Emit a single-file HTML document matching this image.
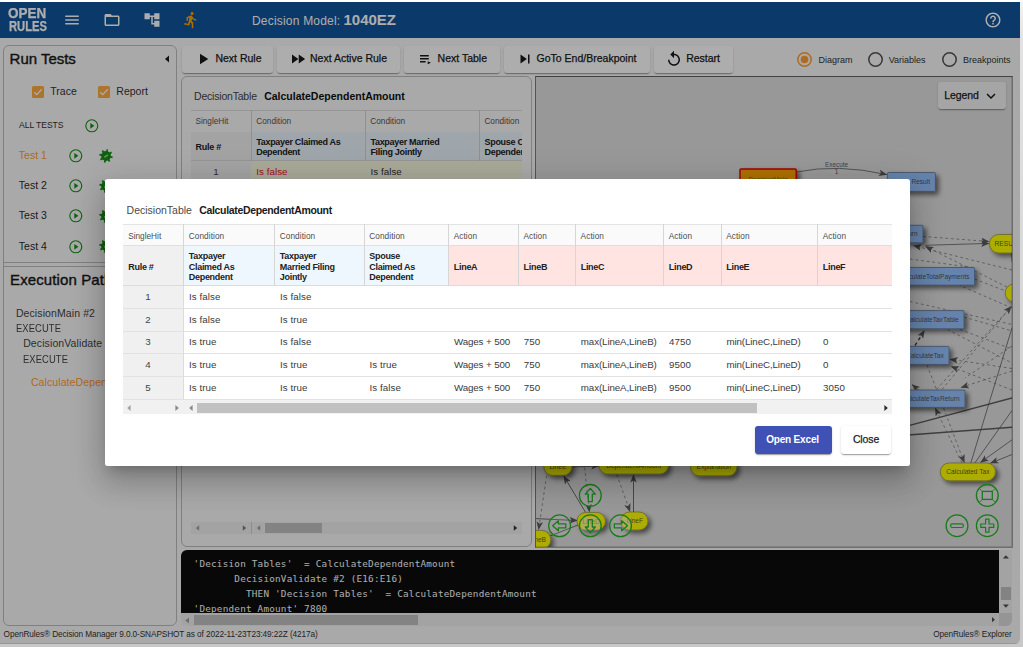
<!DOCTYPE html>
<html lang="en">
<head>
<meta charset="utf-8">
<title>OpenRules Explorer</title>
<style>
*{box-sizing:border-box;margin:0;padding:0}
html,body{width:1023px;height:647px;overflow:hidden}
body{background:linear-gradient(#f4f4f4 0,#e2e2e2 40px,#c8c8c8 100%);font-family:"Liberation Sans",Arial,sans-serif;color:#222;position:relative}
.topline{position:absolute;left:0;top:0;width:1023px;height:2px;background:#fff}
#app{position:absolute;left:0;top:2px;width:1020.2px;height:642px;background:#fafafa;overflow:hidden;border-radius:0 0 5px 0}
.abs{position:absolute}
.t{position:absolute;white-space:nowrap;line-height:1}
/* header */
#hdr{position:absolute;left:0;top:0;width:1020px;height:36px;background:#10559d}
.logo{color:#fff;font-weight:bold;transform-origin:0 0;-webkit-text-stroke:.25px #fff}
.ep{font-size:10.5px;color:#444;letter-spacing:.1px}
.hd{font-size:15px;color:#1a1a1a;-webkit-text-stroke:.4px #1a1a1a;letter-spacing:-.02px}
.bl{top:7.2px;font-size:10.5px;color:#1a1a1a;-webkit-text-stroke:.25px #1a1a1a}
.rl{top:54.1px;font-size:9px;color:#333}
/* panels */
.panel{position:absolute;border:1px solid #bdbdbd;border-radius:6px;background:transparent}
.btn{position:absolute;top:44px;height:27px;border-radius:3px;background:#fff;box-shadow:0 2px 1px -1px rgba(0,0,0,.2),0 1px 1px 0 rgba(0,0,0,.14),0 1px 3px 0 rgba(0,0,0,.12)}
#dim{position:absolute;left:0;top:0;width:1021px;height:642px;background:rgba(0,0,0,.32);box-shadow:inset 0 -1px 0 rgba(0,0,0,.1)}
#modal{position:absolute;left:105px;top:179px;width:805.3px;height:286.7px;background:#fff;border-radius:2.5px;box-shadow:0 8px 11px -5px rgba(0,0,0,.2),0 18px 28px 2px rgba(0,0,0,.14),0 7px 34px 6px rgba(0,0,0,.12)}
</style>
</head>
<body>
<div class="topline"></div>
<div id="app">
  <div id="hdr">
    <div class="t logo" style="left:8px;top:4.3px;font-size:14.5px;transform:scaleX(.93)">OPEN</div>
    <div class="t logo" style="left:8.5px;top:16.6px;font-size:14px;transform:scaleX(.80)">RULES</div>
    <svg class="abs" style="left:63px;top:9px" width="18" height="18" viewBox="0 0 24 24" fill="#fff"><path d="M3 18h18v-2H3v2zm0-5h18v-2H3v2zm0-7v2h18V6H3z"/></svg>
    <svg class="abs" style="left:103px;top:9px" width="18" height="18" viewBox="0 0 24 24" fill="#fff"><path d="M20 6h-8l-2-2H4c-1.1 0-1.99.9-1.99 2L2 18c0 1.1.9 2 2 2h16c1.1 0 2-.9 2-2V8c0-1.1-.9-2-2-2zm0 12H4V8h16v10z"/></svg>
    <svg class="abs" style="left:142.5px;top:8.8px" width="18" height="18" viewBox="0 0 24 24" fill="#fff"><path d="M22 11V3h-7v3H9V3H2v8h7V8h2v10h4v3h7v-8h-7v3h-2V8h2v3z"/></svg>
    <svg class="abs" style="left:181.5px;top:9px" width="18" height="18" viewBox="0 0 24 24" fill="#ffa200"><path d="M13.49 5.48c1.1 0 2-.9 2-2s-.9-2-2-2-2 .9-2 2 .9 2 2 2zm-3.6 13.9l1-4.4 2.1 2v6h2v-7.5l-2.1-2 .6-3c1.3 1.5 3.3 2.5 5.5 2.5v-2c-1.9 0-3.5-1-4.3-2.4l-1-1.6c-.4-.6-1-1-1.7-1-.3 0-.5.1-.8.1l-5.2 2.2v4.7h2v-3.4l1.8-.7-1.6 8.1-4.9-1-.4 2 7 1.4z"/></svg>
    <div class="t" style="left:252px;top:12.5px;font-size:12px;color:#fff;letter-spacing:.2px">Decision Model:</div>
    <div class="t" style="left:343.5px;top:10px;font-size:15px;font-weight:bold;color:#fff">1040EZ</div>
    <svg class="abs" style="left:984px;top:9px" width="18" height="18" viewBox="0 0 24 24" fill="#fff"><path d="M11 18h2v-2h-2v2zm1-16C6.48 2 2 6.48 2 12s4.48 10 10 10 10-4.48 10-10S17.52 2 12 2zm0 18c-4.41 0-8-3.59-8-8s3.59-8 8-8 8 3.59 8 8-3.59 8-8 8zm0-14c-2.21 0-4 1.79-4 4h2c0-1.1.9-2 2-2s2 .9 2 2c0 2-3 1.75-3 5h2c0-2.25 3-2.5 3-5 0-2.21-1.79-4-4-4z"/></svg>
  </div>
  <!-- left panel -->
  <div class="panel" id="left" style="left:3px;top:43px;width:174px;height:581px">
    <div class="t hd" style="left:5.6px;top:4.9px">Run Tests</div>
    <svg class="abs" style="left:158.5px;top:7.7px" width="8" height="10" viewBox="0 0 8 10"><path d="M6 1.5L2 5l4 3.5z" fill="#1a1a1a"/></svg>
    <div class="abs" style="left:28px;top:40px;width:12px;height:12px;background:#ffab40;border-radius:1.5px"><svg width="12" height="12" viewBox="0 0 24 24" style="display:block"><path d="M4.5 12.5l5 5 10-11" stroke="#fff" stroke-width="2.4" fill="none"/></svg></div>
    <div class="t" style="left:46.3px;top:39.8px;font-size:10.5px;color:#333">Trace</div>
    <div class="abs" style="left:94px;top:40px;width:12px;height:12px;background:#ffab40;border-radius:1.5px"><svg width="12" height="12" viewBox="0 0 24 24" style="display:block"><path d="M4.5 12.5l5 5 10-11" stroke="#fff" stroke-width="2.4" fill="none"/></svg></div>
    <div class="t" style="left:112.3px;top:39.8px;font-size:10.5px;color:#333">Report</div>
    <div class="t" style="left:15px;top:75.1px;font-size:8.6px;color:#333;letter-spacing:-.05px">ALL TESTS</div>
    <svg class="abs" style="left:79.6px;top:71.9px" width="15.6" height="15.6" viewBox="0 0 15.6 15.6"><circle cx="7.8" cy="7.8" r="6" fill="none" stroke="#179017" stroke-width="1.15"/><path d="M6.3 4.9v5.8l4.1-2.9z" fill="#179017"/></svg>
    <div class="t" style="left:14.8px;top:103.9px;font-size:10.5px;color:#ff9d2e">Test 1</div>
    <svg class="abs" style="left:63.8px;top:101.7px" width="15.6" height="15.6" viewBox="0 0 15.6 15.6"><circle cx="7.8" cy="7.8" r="6" fill="none" stroke="#179017" stroke-width="1.15"/><path d="M6.3 4.9v5.8l4.1-2.9z" fill="#179017"/></svg>
    <svg class="abs" style="left:94.2px;top:101.6px" width="16" height="16" viewBox="0 0 16 16"><path d="M8.70 4.57L9.33 1.43M10.92 6.07L13.58 4.30M11.43 8.70L14.57 9.33M9.93 10.92L11.70 13.58M7.30 11.43L6.67 14.57M5.08 9.93L2.42 11.70M4.57 7.30L1.43 6.67M6.07 5.08L4.30 2.42" stroke="#179017" stroke-width="1.7" fill="none"/><circle cx="8" cy="8" r="4.9" fill="#179017"/><path d="M6.3 9.4L9.9 6.8" stroke="#9fcf9f" stroke-width="1.5" fill="none"/></svg>
    <div class="t" style="left:14.8px;top:134.2px;font-size:10.5px;color:#2a2a2a">Test 2</div>
    <svg class="abs" style="left:63.8px;top:132.0px" width="15.6" height="15.6" viewBox="0 0 15.6 15.6"><circle cx="7.8" cy="7.8" r="6" fill="none" stroke="#179017" stroke-width="1.15"/><path d="M6.3 4.9v5.8l4.1-2.9z" fill="#179017"/></svg>
    <svg class="abs" style="left:94.2px;top:131.9px" width="16" height="16" viewBox="0 0 16 16"><path d="M8.70 4.57L9.33 1.43M10.92 6.07L13.58 4.30M11.43 8.70L14.57 9.33M9.93 10.92L11.70 13.58M7.30 11.43L6.67 14.57M5.08 9.93L2.42 11.70M4.57 7.30L1.43 6.67M6.07 5.08L4.30 2.42" stroke="#179017" stroke-width="1.7" fill="none"/><circle cx="8" cy="8" r="4.9" fill="#179017"/><path d="M6.3 9.4L9.9 6.8" stroke="#9fcf9f" stroke-width="1.5" fill="none"/></svg>
    <div class="t" style="left:14.8px;top:164.4px;font-size:10.5px;color:#2a2a2a">Test 3</div>
    <svg class="abs" style="left:63.8px;top:162.2px" width="15.6" height="15.6" viewBox="0 0 15.6 15.6"><circle cx="7.8" cy="7.8" r="6" fill="none" stroke="#179017" stroke-width="1.15"/><path d="M6.3 4.9v5.8l4.1-2.9z" fill="#179017"/></svg>
    <svg class="abs" style="left:94.2px;top:162.1px" width="16" height="16" viewBox="0 0 16 16"><path d="M8.70 4.57L9.33 1.43M10.92 6.07L13.58 4.30M11.43 8.70L14.57 9.33M9.93 10.92L11.70 13.58M7.30 11.43L6.67 14.57M5.08 9.93L2.42 11.70M4.57 7.30L1.43 6.67M6.07 5.08L4.30 2.42" stroke="#179017" stroke-width="1.7" fill="none"/><circle cx="8" cy="8" r="4.9" fill="#179017"/><path d="M6.3 9.4L9.9 6.8" stroke="#9fcf9f" stroke-width="1.5" fill="none"/></svg>
    <div class="t" style="left:14.8px;top:194.7px;font-size:10.5px;color:#2a2a2a">Test 4</div>
    <svg class="abs" style="left:63.8px;top:192.5px" width="15.6" height="15.6" viewBox="0 0 15.6 15.6"><circle cx="7.8" cy="7.8" r="6" fill="none" stroke="#179017" stroke-width="1.15"/><path d="M6.3 4.9v5.8l4.1-2.9z" fill="#179017"/></svg>
    <svg class="abs" style="left:94.2px;top:192.4px" width="16" height="16" viewBox="0 0 16 16"><path d="M8.70 4.57L9.33 1.43M10.92 6.07L13.58 4.30M11.43 8.70L14.57 9.33M9.93 10.92L11.70 13.58M7.30 11.43L6.67 14.57M5.08 9.93L2.42 11.70M4.57 7.30L1.43 6.67M6.07 5.08L4.30 2.42" stroke="#179017" stroke-width="1.7" fill="none"/><circle cx="8" cy="8" r="4.9" fill="#179017"/><path d="M6.3 9.4L9.9 6.8" stroke="#9fcf9f" stroke-width="1.5" fill="none"/></svg>
    <div class="abs" style="left:0;top:216px;width:172px;height:5px;background:#fafafa;border-top:1px solid #bdbdbd;border-bottom:1px solid #bdbdbd"></div>
    <div class="t hd" style="left:6.1px;top:225.5px;letter-spacing:.1px">Execution Path</div>
    <div class="t ep" style="left:11.9px;top:262px">DecisionMain #2</div>
    <div class="t ep" style="left:12px;top:277.3px;transform:scaleX(.895);transform-origin:0 0">EXECUTE</div>
    <div class="t ep" style="left:19.2px;top:292.3px">DecisionValidate #2</div>
    <div class="t ep" style="left:19.3px;top:307.7px;transform:scaleX(.895);transform-origin:0 0">EXECUTE</div>
    <div class="t ep" style="left:26.9px;top:330.5px;color:#ff9d2e">CalculateDependentAmount</div>
  </div>
  <!-- toolbar -->
  <div class="btn" style="left:182px;width:91px"><svg class="abs" style="left:12px;top:3.9px" width="18" height="18" viewBox="0 0 24 24" fill="#1a1a1a"><path d="M8 5v14l11-7z"/></svg><span class="t bl" style="left:33.4px">Next Rule</span></div>
  <div class="btn" style="left:277px;width:123px"><svg class="abs" style="left:12.4px;top:3.9px" width="18" height="18" viewBox="0 0 24 24" fill="#1a1a1a"><path d="M4 18l8.5-6L4 6v12zm9-12v12l8.5-6L13 6z"/></svg><span class="t bl" style="left:33px">Next Active Rule</span></div>
  <div class="btn" style="left:404px;width:96px"><svg class="abs" style="left:15.5px;top:8.65px" width="11" height="10" viewBox="0 0 11 10" fill="#1a1a1a"><path d="M0 0h8.8v1.5H0zM0 3h8.8v1.5H0zM0 6h5.6v1.5H0zM7.7 6.2l3.2 1.5-3.2 1.5z"/></svg><span class="t bl" style="left:33.6px">Next Table</span></div>
  <div class="btn" style="left:504px;width:146px"><svg class="abs" style="left:11.5px;top:3.9px" width="18" height="18" viewBox="0 0 24 24" fill="#1a1a1a"><path d="M6 18l8.5-6L6 6v12zM16 6v12h2V6h-2z"/></svg><span class="t bl" style="left:32.6px">GoTo End/Breakpoint</span></div>
  <div class="btn" style="left:654px;width:79px"><svg class="abs" style="left:10.9px;top:4.45px" width="18" height="18" viewBox="0 0 24 24" fill="#1a1a1a"><path d="M12 5V1L7 6l5 5V7c3.31 0 6 2.69 6 6s-2.69 6-6 6-6-2.69-6-6H4c0 4.42 3.58 8 8 8s8-3.58 8-8-3.58-8-8-8z"/></svg><span class="t bl" style="left:32.2px">Restart</span></div>
  <svg class="abs" style="left:797.0px;top:50.3px" width="15" height="15" viewBox="0 0 15 15"><circle cx="7.5" cy="7.5" r="6.7" fill="none" stroke="#ffa031" stroke-width="1.55"/><circle cx="7.5" cy="7.5" r="3.8" fill="#ffa031"/></svg>
  <span class="t rl" style="left:818.5px">Diagram</span>
  <svg class="abs" style="left:867.7px;top:50.3px" width="15" height="15" viewBox="0 0 15 15"><circle cx="7.5" cy="7.5" r="6.7" fill="none" stroke="#555" stroke-width="1.55"/></svg>
  <span class="t rl" style="left:888.7px">Variables</span>
  <svg class="abs" style="left:941.5px;top:50.3px" width="15" height="15" viewBox="0 0 15 15"><circle cx="7.5" cy="7.5" r="6.7" fill="none" stroke="#555" stroke-width="1.55"/></svg>
  <span class="t rl" style="left:963px">Breakpoints</span>
  <!-- table panel -->
  <div class="panel" id="tblp" style="left:181px;top:74px;width:351px;height:470.5px;overflow:hidden">
  <div class="t" style="left:12.0px;top:14.31px;font-size:10.5px;color:#444;letter-spacing:-.2px">DecisionTable</div>
  <div class="t" style="left:82.2px;top:14.31px;font-size:10.5px;color:#111;font-weight:bold">CalculateDependentAmount</div>
  <div class="abs" style="left:9px;top:33px;width:331px;height:425px;overflow:hidden">
  <div class="abs" style="left:0px;top:0px;width:331px;height:22.6px;background:#fafafa;border-top:1px solid #dcdcdc;border-bottom:1px solid #dcdcdc"></div>
  <div class="abs" style="left:0px;top:22px;width:60.4px;height:28.5px;background:#f0f0f0;border-bottom:1px solid #dcdcdc"></div>
  <div class="abs" style="left:60.4px;top:22px;width:271px;height:28.5px;background:#e9f3fc;border-bottom:1px solid #dcdcdc"></div>
  <div class="abs" style="left:0px;top:50.5px;width:60.4px;height:23px;background:#f0f0f0;"></div>
  <div class="abs" style="left:60.4px;top:50.5px;width:271px;height:23px;background:#fafae0;"></div>
  <div class="abs" style="left:59.9px;top:0px;width:1px;height:50.5px;background:#d4d4d4;"></div>
  <div class="abs" style="left:173.9px;top:0px;width:1px;height:50.5px;background:#d4d4d4;"></div>
  <div class="abs" style="left:288.0px;top:0px;width:1px;height:50.5px;background:#d4d4d4;"></div>
  <div class="t" style="left:4.4px;top:8.4px;font-size:8.25px;color:#555">SingleHit</div>
  <div class="t" style="left:65.3px;top:8.4px;font-size:8.25px;color:#555">Condition</div>
  <div class="t" style="left:179.3px;top:8.4px;font-size:8.25px;color:#555">Condition</div>
  <div class="t" style="left:293.4px;top:8.4px;font-size:8.25px;color:#555">Condition</div>
  <div class="t" style="left:4.4px;top:32.88px;font-size:9px;color:#222;font-weight:bold;letter-spacing:-.25px">Rule #</div>
  <div class="t" style="left:65.2px;top:27.58px;font-size:9px;color:#222;font-weight:bold;letter-spacing:-.3px">Taxpayer Claimed As</div>
  <div class="t" style="left:65.2px;top:38.18px;font-size:9px;color:#222;font-weight:bold;letter-spacing:-.3px">Dependent</div>
  <div class="t" style="left:179.4px;top:27.58px;font-size:9px;color:#222;font-weight:bold;letter-spacing:-.3px">Taxpayer Married</div>
  <div class="t" style="left:179.4px;top:38.18px;font-size:9px;color:#222;font-weight:bold;letter-spacing:-.3px">Filing Jointly</div>
  <div class="t" style="left:293.5px;top:27.58px;font-size:9px;color:#222;font-weight:bold;letter-spacing:-.3px">Spouse Claimed As</div>
  <div class="t" style="left:293.5px;top:38.18px;font-size:9px;color:#222;font-weight:bold;letter-spacing:-.3px">Dependent</div>
  <div class="t" style="left:22.2px;top:56.95px;font-size:9.75px;color:#444">1</div>
  <div class="t" style="left:65.3px;top:56.95px;font-size:9.75px;color:#e8141c;letter-spacing:.05px">Is false</div>
  <div class="t" style="left:179.5px;top:56.95px;font-size:9.75px;color:#333;letter-spacing:.05px">Is false</div>
  </div>
  <div class="abs" style="left:9px;top:444.6px;width:331px;height:12.5px;background:#f1f1f1"></div>
  <div class="abs" style="left:68.6px;top:444.6px;width:1px;height:12.5px;background:#d0d0d0"></div>
  <div class="abs" style="left:82.7px;top:446.2px;width:57.7px;height:9.5px;background:#c1c1c1"></div>
  <svg class="abs" style="left:15px;top:450.9px;overflow:visible" width="1" height="1"><polygon points="2.2,-2.8 2.2,2.8 -1.2,0" fill="#a3a3a3"/></svg>
  <svg class="abs" style="left:63px;top:450.9px;overflow:visible" width="1" height="1"><polygon points="-2.2,-2.8 -2.2,2.8 1.2,0" fill="#7c7c7c"/></svg>
  <svg class="abs" style="left:75.6px;top:450.9px;overflow:visible" width="1" height="1"><polygon points="2.2,-2.8 2.2,2.8 -1.2,0" fill="#a3a3a3"/></svg>
  <svg class="abs" style="left:333.5px;top:450.9px;overflow:visible" width="1" height="1"><polygon points="-2.2,-2.8 -2.2,2.8 1.2,0" fill="#303030"/></svg>
  </div>
  <!-- diagram panel -->
  <div class="panel" id="diag" style="left:535px;top:74px;width:478px;height:471.5px;background:#e1e1e1;border-radius:0;border-style:solid;border-width:1px 1.6px 1.6px 1px;border-color:#646464 #9f9f9f #a4a4a4 #7d7d7d;overflow:hidden"><div class="abs" style="left:0;top:0;right:0;bottom:0;box-shadow:inset -1px -1px 0 rgba(0,0,0,.14);z-index:3;pointer-events:none"></div>
    <svg class="abs" style="left:0;top:0" width="476" height="469.5" viewBox="536 77 476 469.5" font-family="Liberation Sans,Arial,sans-serif">
    <defs><filter id="sh" x="-30%" y="-50%" width="180%" height="250%"><feDropShadow dx="3" dy="3" stdDeviation="2.6" flood-color="#000" flood-opacity=".55"/></filter><marker id="ah" viewBox="0 0 10 8" refX="9.5" refY="4" markerWidth="9" markerHeight="6.6" markerUnits="userSpaceOnUse" orient="auto-start-reverse"><path d="M0 0L10 4L0 8L2.2 4z" fill="#5a5a5a"/></marker></defs>
    <path d="M796.5 172Q838 163.5 886.8 174.6" stroke="#5e5e5e" fill="none" stroke-width=".8" marker-end="url(#ah)"/>
    <text x="836.6" y="167" font-size="6.4" fill="#343434" fill-opacity=".8" text-anchor="middle">Execute</text>
    <text x="836.6" y="173.6" font-size="6.4" fill="#343434" fill-opacity=".8" text-anchor="middle">1</text>
    <path d="M923 236.5L989 241.5" stroke="#6c6c6c" fill="none" stroke-width="0.7" stroke-dasharray="2.8 2.8" marker-end="url(#ah)"/>
    <path d="M925.5 245.3L989 243.4" stroke="#5e5e5e" fill="none" stroke-width="0.8" marker-end="url(#ah)"/>
    <path d="M1012 270L913.5 245.6" stroke="#6c6c6c" fill="none" stroke-width="0.7" stroke-dasharray="2.8 2.8" marker-end="url(#ah)"/>
    <path d="M1012 246L1012 262" stroke="#5e5e5e" fill="none" stroke-width="0.9"/>
    <path d="M1012 289.5L925.5 246.5" stroke="#6c6c6c" fill="none" stroke-width="0.7" stroke-dasharray="2.8 2.8" marker-end="url(#ah)"/>
    <path d="M1012 308L960 285.5" stroke="#6c6c6c" fill="none" stroke-width="0.7" stroke-dasharray="2.8 2.8"/>
    <path d="M974.6 279L1005.5 291" stroke="#6c6c6c" fill="none" stroke-width="0.7" stroke-dasharray="2.8 2.8"/>
    <path d="M910 259L975 267.8" stroke="#6c6c6c" fill="none" stroke-width="0.7" stroke-dasharray="2.8 2.8"/>
    <path d="M910 301.5L1012 324.5" stroke="#6c6c6c" fill="none" stroke-width="0.7" stroke-dasharray="2.8 2.8"/>
    <path d="M964 317L1012 331" stroke="#6c6c6c" fill="none" stroke-width="0.7" stroke-dasharray="2.8 2.8"/>
    <path d="M947.5 329.5L1012 363" stroke="#6c6c6c" fill="none" stroke-width="0.7" stroke-dasharray="2.8 2.8"/>
    <path d="M960 329.5L1012 349" stroke="#6c6c6c" fill="none" stroke-width="0.7" stroke-dasharray="2.8 2.8"/>
    <path d="M915 345.6L924.5 330.4" stroke="#444" stroke-width="1.5" stroke-dasharray="3.4 3" fill="none" marker-end="url(#ah)"/>
    <path d="M936.5 389.5L1011.5 306.3" stroke="#6c6c6c" fill="none" stroke-width="0.7" stroke-dasharray="2.8 2.8" marker-end="url(#ah)"/>
    <path d="M942 389.5L1011.5 306.3" stroke="#6c6c6c" fill="none" stroke-width="0.7" stroke-dasharray="2.8 2.8"/>
    <path d="M1012 368.5L950 359.2" stroke="#6c6c6c" fill="none" stroke-width="0.7" stroke-dasharray="2.8 2.8" marker-end="url(#ah)"/>
    <path d="M1012 390L951 366.5" stroke="#6c6c6c" fill="none" stroke-width="0.7" stroke-dasharray="2.8 2.8" marker-end="url(#ah)"/>
    <path d="M1012 371L961 387.5" stroke="#6c6c6c" fill="none" stroke-width="0.7" stroke-dasharray="2.8 2.8" marker-end="url(#ah)"/>
    <path d="M1012 346L965 378" stroke="#6c6c6c" fill="none" stroke-width="0.7" stroke-dasharray="2.8 2.8"/>
    <path d="M927 365L936.5 389.5" stroke="#6c6c6c" fill="none" stroke-width="0.7" stroke-dasharray="2.8 2.8"/>
    <path d="M921 392L912 384.5" stroke="#5e5e5e" fill="none" stroke-width="0.8" marker-end="url(#ah)"/>
    <path d="M1012 327.8L970.8 463" stroke="#5e5e5e" fill="none" stroke-width="0.8"/>
    <path d="M1012 410.5L974.8 463" stroke="#5e5e5e" fill="none" stroke-width="0.8"/>
    <path d="M1012 439.8L980.5 462.4" stroke="#5e5e5e" fill="none" stroke-width="0.8" marker-end="url(#ah)"/>
    <path d="M1012 454.5L990.5 463.2" stroke="#5e5e5e" fill="none" stroke-width="0.8" marker-end="url(#ah)"/>
    <path d="M1012 398L905 426.6" stroke="#5e5e5e" fill="none" stroke-width="1.5"/>
    <path d="M1012 427.2L905 435.3" stroke="#5e5e5e" fill="none" stroke-width="1.5"/>
    <path d="M962 463L935.2 408" stroke="#6c6c6c" fill="none" stroke-width="0.7" stroke-dasharray="2.8 2.8" marker-end="url(#ah)"/>
    <path d="M943.6 408L964.3 462.6" stroke="#6c6c6c" fill="none" stroke-width="0.7" stroke-dasharray="2.8 2.8" marker-end="url(#ah)"/>
    <path d="M585.5 512.3L563.8 476" stroke="#5e5e5e" fill="none" stroke-width="0.9" marker-end="url(#ah)"/>
    <path d="M633.5 512L633.5 474.6" stroke="#5e5e5e" fill="none" stroke-width="0.9" marker-end="url(#ah)"/>
    <path d="M616.8 474.5L630 511.6" stroke="#6c6c6c" fill="none" stroke-width="0.7" stroke-dasharray="2.8 2.8" marker-end="url(#ah)"/>
    <path d="M584 462L589.4 512" stroke="#6c6c6c" fill="none" stroke-width="0.7" stroke-dasharray="2.8 2.8" marker-end="url(#ah)"/>
    <path d="M546.6 475.5L538.6 529.6" stroke="#6c6c6c" fill="none" stroke-width="0.7" stroke-dasharray="2.8 2.8" marker-end="url(#ah)"/>
    <path d="M536 518.6L577.5 520.6" stroke="#5e5e5e" fill="none" stroke-width="0.9" marker-end="url(#ah)"/>
    <path d="M550 536L578 525" stroke="#5e5e5e" fill="none" stroke-width="0.9"/>
    <path d="M572 467L599 466" stroke="#5e5e5e" fill="none" stroke-width="0.9" marker-end="url(#ah)"/>
    <rect x="740" y="169" width="56.2" height="21" rx="1" fill="#ffa500" stroke="#e60000" stroke-width="1.4" filter="url(#sh)"/><text x="768.1" y="181.8" font-size="6.6" fill="#2c6a00" fill-opacity=".8" text-anchor="middle">DecisionMain</text>
    <rect x="887.4" y="172.5" width="48.0" height="18.9" rx="0.9" fill="#97c2fc" stroke="#55688c" stroke-width="0.7" filter="url(#sh)"/><text x="930.1" y="184.25" font-size="6.6" fill="#343434" fill-opacity=".8" text-anchor="end">Tax Result</text>
    <rect x="850" y="225.3" width="73" height="17.5" rx="0.9" fill="#97c2fc" stroke="#55688c" stroke-width="0.7" filter="url(#sh)"/><text x="917.7" y="236.35" font-size="6.6" fill="#343434" fill-opacity=".8" text-anchor="end">CalculateTaxReturn</text>
    <rect x="884" y="267.5" width="90.6" height="17.6" rx="0.9" fill="#97c2fc" stroke="#55688c" stroke-width="0.7" filter="url(#sh)"/><text x="969.3000000000001" y="278.6" font-size="6.6" fill="#343434" fill-opacity=".8" text-anchor="end">CalculateTotalPayments</text>
    <rect x="896" y="310.6" width="68" height="18.2" rx="0.9" fill="#97c2fc" stroke="#55688c" stroke-width="0.7" filter="url(#sh)"/><text x="958.7" y="322.0" font-size="6.6" fill="#343434" fill-opacity=".8" text-anchor="end">CalculateTaxTable</text>
    <rect x="898" y="346.4" width="51" height="18.0" rx="0.9" fill="#97c2fc" stroke="#55688c" stroke-width="0.7" filter="url(#sh)"/><text x="943.7" y="357.7" font-size="6.6" fill="#343434" fill-opacity=".8" text-anchor="end">CalculateTax</text>
    <rect x="888" y="390" width="77" height="17.4" rx="0.9" fill="#97c2fc" stroke="#55688c" stroke-width="0.7" filter="url(#sh)"/><text x="959.7" y="401.0" font-size="6.6" fill="#343434" fill-opacity=".8" text-anchor="end">CalculateTaxReturn</text>
    <rect x="989.4" y="234.5" width="55.6" height="18.5" rx="9.25" fill="#ffff00" stroke="#8f8a3a" stroke-width="0.7" filter="url(#sh)"/><text x="994.6" y="246.05" font-size="6.6" fill="#343434" fill-opacity=".8" text-anchor="start">RESULT</text>
    <rect x="1005.2" y="284" width="39.8" height="17.8" rx="8.9" fill="#ffff00" stroke="#8f8a3a" stroke-width="0.7" filter="url(#sh)"/>
    <rect x="940.3" y="463" width="55.2" height="17.8" rx="8.9" fill="#ffff00" stroke="#8f8a3a" stroke-width="0.7" filter="url(#sh)"/><text x="967.9" y="474.2" font-size="6.6" fill="#343434" fill-opacity=".8" text-anchor="middle">Calculated Tax</text>
    <rect x="543.8" y="457.7" width="28.2" height="17.6" rx="8.8" fill="#ffff00" stroke="#8f8a3a" stroke-width="0.7" filter="url(#sh)"/><text x="557.9" y="468.8" font-size="6.6" fill="#343434" fill-opacity=".8" text-anchor="middle">LineE</text>
    <rect x="598.8" y="456.4" width="69.7" height="17.6" rx="8.8" fill="#ffff00" stroke="#8f8a3a" stroke-width="0.7" filter="url(#sh)"/><text x="633.65" y="467.5" font-size="6.6" fill="#343434" fill-opacity=".8" text-anchor="middle">DependentAmount</text>
    <rect x="690.6" y="458.2" width="46.4" height="17.6" rx="8.8" fill="#ffff00" stroke="#8f8a3a" stroke-width="0.7" filter="url(#sh)"/><text x="713.8" y="469.3" font-size="6.6" fill="#343434" fill-opacity=".8" text-anchor="middle">Explanation</text>
    <rect x="577" y="512.4" width="28.4" height="17.6" rx="8.8" fill="#ffff00" stroke="#8f8a3a" stroke-width="0.7" filter="url(#sh)"/><text x="591.2" y="523.5" font-size="6.6" fill="#343434" fill-opacity=".8" text-anchor="middle">LineD</text>
    <rect x="620.7" y="512" width="27.3" height="18" rx="9.0" fill="#ffff00" stroke="#8f8a3a" stroke-width="0.7" filter="url(#sh)"/><text x="643" y="523.3" font-size="6.6" fill="#343434" fill-opacity=".8" text-anchor="end">LineF</text>
    <rect x="515" y="530.4" width="35.8" height="18.6" rx="9.3" fill="#ffff00" stroke="#8f8a3a" stroke-width="0.7" filter="url(#sh)"/><text x="546" y="542.0" font-size="6.6" fill="#343434" fill-opacity=".8" text-anchor="end">LineB</text>
    <clipPath id="cD"><rect x="577" y="512.4" width="28.4" height="17.6" rx="8.8"/></clipPath><clipPath id="cF"><rect x="620.7" y="512" width="27.3" height="18" rx="9"/></clipPath>
    <rect x="581" y="517" width="18.6" height="17" fill="#fff" fill-opacity=".42" clip-path="url(#cD)"/>
    <rect x="611" y="517" width="19.6" height="17" fill="#fff" fill-opacity=".42" clip-path="url(#cF)"/>
    <circle cx="590.3" cy="495.4" r="10.9" fill="rgba(255,255,255,.16)" stroke="#27b527" stroke-width="1.3"/>
    <path transform="translate(590.3 495.4) rotate(0)" d="M0 -7L-5 -1.2H-2V6.2H2V-1.2H5Z" stroke="#27b527" fill="none" stroke-width="1.3" stroke-linejoin="round"/>
    <circle cx="559.6" cy="525.8" r="10.9" fill="rgba(255,255,255,.16)" stroke="#27b527" stroke-width="1.3"/>
    <path transform="translate(559.6 525.8) rotate(-90)" d="M0 -7L-5 -1.2H-2V6.2H2V-1.2H5Z" stroke="#27b527" fill="none" stroke-width="1.3" stroke-linejoin="round"/>
    <circle cx="590.3" cy="525.8" r="10.9" fill="rgba(255,255,255,.16)" stroke="#27b527" stroke-width="1.3"/>
    <path transform="translate(590.3 525.8) rotate(180)" d="M0 -7L-5 -1.2H-2V6.2H2V-1.2H5Z" stroke="#27b527" fill="none" stroke-width="1.3" stroke-linejoin="round"/>
    <circle cx="620.5" cy="525.8" r="10.9" fill="rgba(255,255,255,.16)" stroke="#27b527" stroke-width="1.3"/>
    <path transform="translate(620.5 525.8) rotate(90)" d="M0 -7L-5 -1.2H-2V6.2H2V-1.2H5Z" stroke="#27b527" fill="none" stroke-width="1.3" stroke-linejoin="round"/>
    <circle cx="987.3" cy="495.4" r="10.9" fill="rgba(255,255,255,.16)" stroke="#27b527" stroke-width="1.3"/>
    <rect x="982.3" y="491.4" width="10" height="8" stroke="#27b527" fill="none" stroke-width="1.3"/>
    <path d="M979.6 488.6l2 2M995 488.6l-2 2M979.6 502.2l2-2M995 502.2l-2-2" stroke="#27b527" fill="none" stroke-width="1"/>
    <circle cx="957" cy="525.7" r="10.9" fill="rgba(255,255,255,.16)" stroke="#27b527" stroke-width="1.3"/>
    <rect x="950.6" y="523.9" width="12.8" height="3.6" rx="1.8" stroke="#27b527" fill="none" stroke-width="1.2"/>
    <circle cx="987.3" cy="525.7" r="10.9" fill="rgba(255,255,255,.16)" stroke="#27b527" stroke-width="1.3"/>
    <path d="M985.6 519.2h3.4v4.8h4.8v3.4h-4.8v4.8h-3.4v-4.8h-4.8v-3.4h4.8z" stroke="#27b527" fill="none" stroke-width="1.2" stroke-linejoin="round"/>
    </svg>
    <div class="abs" style="left:402px;top:5.3px;width:67.6px;height:26.5px;background:#f4f4f4;border-radius:3px;box-shadow:0 2px 1px -1px rgba(0,0,0,.2),0 1px 1px 0 rgba(0,0,0,.14),0 1px 3px 0 rgba(0,0,0,.12)">
      <span class="t" style="left:6.2px;top:7.7px;font-size:10.5px;color:#1a1a1a;-webkit-text-stroke:.25px #1a1a1a;letter-spacing:-.1px">Legend</span>
      <svg class="abs" style="left:44px;top:4.6px" width="18" height="18" viewBox="0 0 24 24" fill="#1a1a1a"><path d="M16.59 8.59L12 13.17 7.41 8.59 6 10l6 6 6-6z"/></svg>
    </div>
  </div>
  <!-- console -->
  <div class="abs" id="cons" style="left:181px;top:548.4px;width:831px;height:75.6px;background:#f1f1f1;border-radius:6px 0 6px 6px;overflow:hidden">
    <div class="abs" style="left:0;top:0;width:818px;height:62.8px;background:#0c0c0c;overflow:hidden">
      <pre class="abs" style="left:12.6px;top:5.2px;margin:0;font-family:'DejaVu Sans Mono','Liberation Mono',monospace;font-size:9.3px;letter-spacing:.22px;line-height:15.05px;color:#fff">'Decision Tables'  = CalculateDependentAmount
       DecisionValidate #2 (E16:E16)
         THEN 'Decision Tables'  = CalculateDependentAmount
'Dependent Amount' 7800</pre>
    </div>
    <!-- h scrollbar -->
    <div class="abs" style="left:13.2px;top:65px;width:223.6px;height:9.3px;background:#c1c1c1"></div>
    <svg class="abs" style="left:3px;top:66.2px" width="6" height="7" viewBox="0 0 6 7"><path d="M5 .5v6L1.2 3.5z" fill="#a3a3a3"/></svg>
    <svg class="abs" style="left:0;top:0;overflow:visible" width="1" height="1"><path d="M811 67.1v5.2l2.9-2.6z" fill="#505050"/></svg>
    <!-- v scrollbar -->
    <div class="abs" style="left:820.1px;top:36.7px;width:9.6px;height:12.6px;background:#c1c1c1"></div>
    <svg class="abs" style="left:0;top:0;overflow:visible" width="1" height="1"><path d="M821.8 8.6h6.2l-3.1-3.3z" fill="#505050"/></svg>
    <svg class="abs" style="left:0;top:0;overflow:visible" width="1" height="1"><path d="M821.9 54.5h6l-3 3.2z" fill="#505050"/></svg>
    <div class="abs" style="left:818px;top:62.8px;width:13px;height:12.8px;background:#dcdcdc"></div>
  </div>
  <div class="t" style="left:3.6px;top:629px;font-size:8.25px;color:#333;letter-spacing:-.1px">OpenRules® Decision Manager 9.0.0-SNAPSHOT as of 2022-11-23T23:49:22Z (4217a)</div>
  <div class="t" style="right:8.5px;top:629px;font-size:8.25px;color:#333;letter-spacing:-.1px">OpenRules® Explorer</div>
  <div id="dim"></div>
</div>
<div id="modal">
  <div class="t" style="left:21.6px;top:26.01px;font-size:10.5px;color:#4a4a4a">DecisionTable</div>
  <div class="t" style="left:94.2px;top:26.01px;font-size:10.5px;color:#1a1a1a;font-weight:bold;letter-spacing:-.33px">CalculateDependentAmount</div>
  <div class="abs" style="left:18px;top:45px;width:769px;height:190px;overflow:hidden">
  <div class="abs" style="left:0px;top:0px;width:769px;height:22.4px;background:#fafafa;border-top:1px solid #e4e4e4;border-bottom:1px solid #e0e0e0"></div>
  <div class="abs" style="left:0px;top:22.4px;width:60.5px;height:39.1px;background:#f0f0f0;"></div>
  <div class="abs" style="left:60.5px;top:22.4px;width:265px;height:39.1px;background:#eef6fe;"></div>
  <div class="abs" style="left:325.5px;top:22.4px;width:452px;height:39.1px;background:#ffe4e1;"></div>
  <div class="abs" style="left:0px;top:61px;width:769px;height:1px;background:#dcdcdc;"></div>
  <div class="abs" style="left:0px;top:61.5px;width:60.5px;height:113.7px;background:#f0f0f0;"></div>
  <div class="abs" style="left:0px;top:83.8px;width:769px;height:1px;background:#e2e2e2;"></div>
  <div class="abs" style="left:0px;top:106.5px;width:769px;height:1px;background:#e2e2e2;"></div>
  <div class="abs" style="left:0px;top:129.2px;width:769px;height:1px;background:#e2e2e2;"></div>
  <div class="abs" style="left:0px;top:151.9px;width:769px;height:1px;background:#e2e2e2;"></div>
  <div class="abs" style="left:0px;top:174.7px;width:769px;height:1px;background:#e2e2e2;"></div>
  <div class="abs" style="left:60.0px;top:0px;width:1px;height:61.5px;background:#d6d6d6;"></div>
  <div class="abs" style="left:151.0px;top:0px;width:1px;height:61.5px;background:#d6d6d6;"></div>
  <div class="abs" style="left:240.5px;top:0px;width:1px;height:61.5px;background:#d6d6d6;"></div>
  <div class="abs" style="left:325.0px;top:0px;width:1px;height:61.5px;background:#d6d6d6;"></div>
  <div class="abs" style="left:394.8px;top:0px;width:1px;height:61.5px;background:#d6d6d6;"></div>
  <div class="abs" style="left:451.9px;top:0px;width:1px;height:61.5px;background:#d6d6d6;"></div>
  <div class="abs" style="left:540.0px;top:0px;width:1px;height:61.5px;background:#d6d6d6;"></div>
  <div class="abs" style="left:597.5px;top:0px;width:1px;height:61.5px;background:#d6d6d6;"></div>
  <div class="abs" style="left:694.0px;top:0px;width:1px;height:61.5px;background:#d6d6d6;"></div>
  <div class="abs" style="left:60px;top:61.5px;width:1px;height:113.7px;background:#dcdcdc;"></div>
  <div class="t" style="left:5.2px;top:8.52px;font-size:8.25px;color:#4d4d4d">SingleHit</div>
  <div class="t" style="left:65.7px;top:8.52px;font-size:8.25px;color:#4d4d4d;letter-spacing:.08px">Condition</div>
  <div class="t" style="left:156.7px;top:8.52px;font-size:8.25px;color:#4d4d4d;letter-spacing:.08px">Condition</div>
  <div class="t" style="left:246.2px;top:8.52px;font-size:8.25px;color:#4d4d4d;letter-spacing:.08px">Condition</div>
  <div class="t" style="left:330.7px;top:8.52px;font-size:8.25px;color:#4d4d4d;letter-spacing:.08px">Action</div>
  <div class="t" style="left:400.5px;top:8.52px;font-size:8.25px;color:#4d4d4d;letter-spacing:.08px">Action</div>
  <div class="t" style="left:457.6px;top:8.52px;font-size:8.25px;color:#4d4d4d;letter-spacing:.08px">Action</div>
  <div class="t" style="left:545.7px;top:8.52px;font-size:8.25px;color:#4d4d4d;letter-spacing:.08px">Action</div>
  <div class="t" style="left:603.2px;top:8.52px;font-size:8.25px;color:#4d4d4d;letter-spacing:.08px">Action</div>
  <div class="t" style="left:699.7px;top:8.52px;font-size:8.25px;color:#4d4d4d;letter-spacing:.08px">Action</div>
  <div class="t" style="left:5.3px;top:39.08px;font-size:9px;color:#222;font-weight:bold;letter-spacing:-.3px">Rule #</div>
  <div class="t" style="left:65.8px;top:28.08px;font-size:9px;color:#222;font-weight:bold;letter-spacing:-.3px">Taxpayer</div>
  <div class="t" style="left:65.8px;top:38.68px;font-size:9px;color:#222;font-weight:bold;letter-spacing:-.3px">Claimed As</div>
  <div class="t" style="left:65.8px;top:49.28px;font-size:9px;color:#222;font-weight:bold;letter-spacing:-.3px">Dependent</div>
  <div class="t" style="left:156.8px;top:28.08px;font-size:9px;color:#222;font-weight:bold;letter-spacing:-.3px">Taxpayer</div>
  <div class="t" style="left:156.8px;top:38.68px;font-size:9px;color:#222;font-weight:bold;letter-spacing:-.3px">Married Filing</div>
  <div class="t" style="left:156.8px;top:49.28px;font-size:9px;color:#222;font-weight:bold;letter-spacing:-.3px">Jointly</div>
  <div class="t" style="left:246.3px;top:28.08px;font-size:9px;color:#222;font-weight:bold;letter-spacing:-.3px">Spouse</div>
  <div class="t" style="left:246.3px;top:38.68px;font-size:9px;color:#222;font-weight:bold;letter-spacing:-.3px">Claimed As</div>
  <div class="t" style="left:246.3px;top:49.28px;font-size:9px;color:#222;font-weight:bold;letter-spacing:-.3px">Dependent</div>
  <div class="t" style="left:330.8px;top:39.08px;font-size:9px;color:#222;font-weight:bold;letter-spacing:-.3px">LineA</div>
  <div class="t" style="left:400.6px;top:39.08px;font-size:9px;color:#222;font-weight:bold;letter-spacing:-.3px">LineB</div>
  <div class="t" style="left:457.7px;top:39.08px;font-size:9px;color:#222;font-weight:bold;letter-spacing:-.3px">LineC</div>
  <div class="t" style="left:545.8px;top:39.08px;font-size:9px;color:#222;font-weight:bold;letter-spacing:-.3px">LineD</div>
  <div class="t" style="left:603.3px;top:39.08px;font-size:9px;color:#222;font-weight:bold;letter-spacing:-.3px">LineE</div>
  <div class="t" style="left:699.8px;top:39.08px;font-size:9px;color:#222;font-weight:bold;letter-spacing:-.3px">LineF</div>
  <div class="t" style="left:15px;top:67.85px;font-size:9.75px;color:#444;width:20px;text-align:center">1</div>
  <div class="t" style="left:65.9px;top:67.85px;font-size:9.75px;color:#3a3a3a;letter-spacing:.08px">Is false</div>
  <div class="t" style="left:156.9px;top:67.85px;font-size:9.75px;color:#3a3a3a;letter-spacing:.08px">Is false</div>
  <div class="t" style="left:15px;top:90.58px;font-size:9.75px;color:#444;width:20px;text-align:center">2</div>
  <div class="t" style="left:65.9px;top:90.58px;font-size:9.75px;color:#3a3a3a;letter-spacing:.08px">Is false</div>
  <div class="t" style="left:156.9px;top:90.58px;font-size:9.75px;color:#3a3a3a;letter-spacing:.08px">Is true</div>
  <div class="t" style="left:15px;top:113.31px;font-size:9.75px;color:#444;width:20px;text-align:center">3</div>
  <div class="t" style="left:65.9px;top:113.31px;font-size:9.75px;color:#3a3a3a;letter-spacing:.08px">Is true</div>
  <div class="t" style="left:156.9px;top:113.31px;font-size:9.75px;color:#3a3a3a;letter-spacing:.08px">Is false</div>
  <div class="t" style="left:330.9px;top:113.31px;font-size:9.75px;color:#3a3a3a;letter-spacing:-.1px">Wages + 500</div>
  <div class="t" style="left:400.7px;top:113.31px;font-size:9.75px;color:#3a3a3a;letter-spacing:.1px">750</div>
  <div class="t" style="left:457.8px;top:113.31px;font-size:9.75px;color:#3a3a3a;letter-spacing:-.1px">max(LineA,LineB)</div>
  <div class="t" style="left:545.9px;top:113.31px;font-size:9.75px;color:#3a3a3a;letter-spacing:.1px">4750</div>
  <div class="t" style="left:603.4px;top:113.31px;font-size:9.75px;color:#3a3a3a;letter-spacing:-.1px">min(LineC,LineD)</div>
  <div class="t" style="left:699.9px;top:113.31px;font-size:9.75px;color:#3a3a3a;letter-spacing:.1px">0</div>
  <div class="t" style="left:15px;top:136.04px;font-size:9.75px;color:#444;width:20px;text-align:center">4</div>
  <div class="t" style="left:65.9px;top:136.04px;font-size:9.75px;color:#3a3a3a;letter-spacing:.08px">Is true</div>
  <div class="t" style="left:156.9px;top:136.04px;font-size:9.75px;color:#3a3a3a;letter-spacing:.08px">Is true</div>
  <div class="t" style="left:246.4px;top:136.04px;font-size:9.75px;color:#3a3a3a;letter-spacing:.08px">Is true</div>
  <div class="t" style="left:330.9px;top:136.04px;font-size:9.75px;color:#3a3a3a;letter-spacing:-.1px">Wages + 500</div>
  <div class="t" style="left:400.7px;top:136.04px;font-size:9.75px;color:#3a3a3a;letter-spacing:.1px">750</div>
  <div class="t" style="left:457.8px;top:136.04px;font-size:9.75px;color:#3a3a3a;letter-spacing:-.1px">max(LineA,LineB)</div>
  <div class="t" style="left:545.9px;top:136.04px;font-size:9.75px;color:#3a3a3a;letter-spacing:.1px">9500</div>
  <div class="t" style="left:603.4px;top:136.04px;font-size:9.75px;color:#3a3a3a;letter-spacing:-.1px">min(LineC,LineD)</div>
  <div class="t" style="left:699.9px;top:136.04px;font-size:9.75px;color:#3a3a3a;letter-spacing:.1px">0</div>
  <div class="t" style="left:15px;top:158.77px;font-size:9.75px;color:#444;width:20px;text-align:center">5</div>
  <div class="t" style="left:65.9px;top:158.77px;font-size:9.75px;color:#3a3a3a;letter-spacing:.08px">Is true</div>
  <div class="t" style="left:156.9px;top:158.77px;font-size:9.75px;color:#3a3a3a;letter-spacing:.08px">Is true</div>
  <div class="t" style="left:246.4px;top:158.77px;font-size:9.75px;color:#3a3a3a;letter-spacing:.08px">Is false</div>
  <div class="t" style="left:330.9px;top:158.77px;font-size:9.75px;color:#3a3a3a;letter-spacing:-.1px">Wages + 500</div>
  <div class="t" style="left:400.7px;top:158.77px;font-size:9.75px;color:#3a3a3a;letter-spacing:.1px">750</div>
  <div class="t" style="left:457.8px;top:158.77px;font-size:9.75px;color:#3a3a3a;letter-spacing:-.1px">max(LineA,LineB)</div>
  <div class="t" style="left:545.9px;top:158.77px;font-size:9.75px;color:#3a3a3a;letter-spacing:.1px">9500</div>
  <div class="t" style="left:603.4px;top:158.77px;font-size:9.75px;color:#3a3a3a;letter-spacing:-.1px">min(LineC,LineD)</div>
  <div class="t" style="left:699.9px;top:158.77px;font-size:9.75px;color:#3a3a3a;letter-spacing:.1px">3050</div>
  <div class="abs" style="left:0px;top:175.7px;width:769px;height:14.3px;background:#f1f1f1;"></div>
  <div class="abs" style="left:74px;top:178.8px;width:560px;height:10px;background:#c1c1c1;"></div>
  <svg class="abs" style="left:6.3px;top:183.6px;overflow:visible" width="1" height="1"><polygon points="1.6,-3 1.6,3 -1.8,0" fill="#a3a3a3"/></svg>
  <svg class="abs" style="left:53.8px;top:183.6px;overflow:visible" width="1" height="1"><polygon points="-1.6,-3 -1.6,3 1.8,0" fill="#8a8a8a"/></svg>
  <svg class="abs" style="left:67.7px;top:183.6px;overflow:visible" width="1" height="1"><polygon points="1.6,-3 1.6,3 -1.8,0" fill="#8a8a8a"/></svg>
  <svg class="abs" style="left:762.6px;top:183.6px;overflow:visible" width="1" height="1"><polygon points="-1.6,-3 -1.6,3 1.8,0" fill="#2a2a2a"/></svg>
  </div>
  <div class="abs" style="left:649.6px;top:247.39999999999998px;width:77.3px;height:27.3px;background:#3f51b5;border-radius:3px;box-shadow:0 2px 1px -1px rgba(0,0,0,.2),0 1px 1px 0 rgba(0,0,0,.14),0 1px 3px 0 rgba(0,0,0,.12)"><span class="t" style="left:11.6px;top:8.6px;font-size:10px;font-weight:bold;color:#fff;letter-spacing:-.18px">Open Excel</span></div>
  <div class="abs" style="left:735.7px;top:247.39999999999998px;width:50.4px;height:27.3px;background:#fff;border-radius:3px;box-shadow:0 2px 1px -1px rgba(0,0,0,.2),0 1px 1px 0 rgba(0,0,0,.14),0 1px 3px 0 rgba(0,0,0,.12)"><span class="t" style="left:12.2px;top:7.8px;font-size:10.5px;color:#222;-webkit-text-stroke:.25px #222;letter-spacing:-.1px">Close</span></div>
</div>
</body>
</html>
